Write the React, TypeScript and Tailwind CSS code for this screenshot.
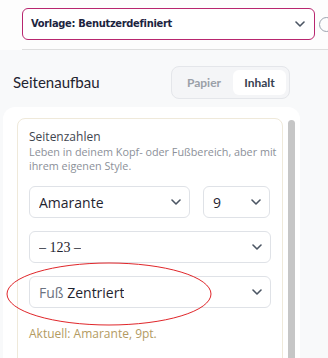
import * as React from "react";

/* ---------------- Icons ---------------- */

const Chevron = ({ className = "" }: { className?: string }) => (
  <svg width="10" height="6" viewBox="0 0 10 6" className={className} fill="none">
    <path d="M1 1l4 4 4-4" stroke="currentColor" strokeWidth="1.6" strokeLinecap="round" strokeLinejoin="round" />
  </svg>
);

/* ---------------- Select box ---------------- */

const SelectBox = ({
  children,
  className = "",
}: {
  children: React.ReactNode;
  className?: string;
}) => (
  <div
    className={
      "flex h-[32px] items-center justify-between rounded-[6px] border border-[#dfe2e7] bg-white pl-[9px] pr-[8px] text-[14px] text-[#1f2430] " +
      className
    }
  >
    <span className="truncate">{children}</span>
    <Chevron className="text-[#4b5563]" />
  </div>
);

/* ---------------- App ---------------- */

export default function App() {
  return (
    <div className="relative h-[358px] w-[328px] overflow-hidden bg-[#f8f9fa] font-['Open_Sans',sans-serif]">
      {/* top bar */}
      <div className="bg-[#fdfdfd] pt-[8px]">
        <div className="ml-[22px] flex items-center gap-[4px] border-b border-[#dedede] pb-[9px]">
          <div className="flex h-[32px] w-[293px] shrink-0 items-center justify-between rounded-[6px] border border-[#b8266f] bg-white pl-[8px] pr-[9px]">
            <span className="font-['DejaVu_Sans_Condensed',sans-serif] text-[11px] font-bold tracking-[-0.3px] text-[#1c2440]">
              Vorlage: Benutzerdefiniert
            </span>
            <Chevron className="text-[#4b5563]" />
          </div>
          <div className="h-[15px] w-[15px] shrink-0 rounded-full border border-[#9ca3af]" />
        </div>
      </div>

      {/* heading row */}
      <div className="flex items-center justify-between pl-[13px] pr-[38px] pt-[16px]">
        <span className="font-['Lato',sans-serif] text-[15px] text-[#1f2430]">Seitenaufbau</span>
        <div className="flex h-[33px] w-[119px] items-center rounded-[8px] border border-[#e4e6ea] bg-[#f4f5f7] p-[3px] font-['Lato',sans-serif] text-[12px] font-bold">
          <span className="flex-1 text-center text-[#9aa0a8]">Papier</span>
          <span className="flex h-full w-[53px] items-center justify-center rounded-[6px] bg-white text-[#374151]">
            Inhalt
          </span>
        </div>
      </div>

      {/* panel */}
      <div className="ml-[3px] mt-[8px] flex w-[297px] gap-[5px] rounded-t-[12px] bg-white pl-[14px] pt-[11px]">
        <div className="w-[266px] shrink-0 rounded-[8px] border border-[#efe9da] px-[11px] pb-[14px] pt-[10px]">
          <div className="text-[12px] leading-[16px] text-[#3f4650]">Seitenzahlen</div>
          <div className="whitespace-nowrap text-[10.8px] leading-[14px] text-[#8b9099]">
            Leben in deinem Kopf- oder Fußbereich, aber mit
            <br />
            ihrem eigenen Style.
          </div>

          <div className="mt-[13px] flex gap-[13px]">
            <SelectBox className="w-[161px]">Amarante</SelectBox>
            <SelectBox className="w-[67px]">9</SelectBox>
          </div>
          <SelectBox className="mt-[13px] font-['Liberation_Serif',serif]">– 123 –</SelectBox>
          <SelectBox className="mt-[13px]">
            <span className="text-[#6b7280]">Fuß</span> Zentriert
          </SelectBox>

          <div className="mt-[18px] text-[12px] leading-[15px] text-[#b39b62]">Aktuell: Amarante, 9pt.</div>
        </div>
        <div className="mt-[2px] h-[260px] w-[7px] shrink-0 rounded-t-[4px] bg-[#c6c6c6]" />
      </div>

      {/* annotation ellipse */}
      <svg className="pointer-events-none absolute left-0 top-0" width="328" height="358">
        <ellipse cx="109" cy="294" rx="102" ry="31" fill="none" stroke="#e0262a" strokeWidth="1" />
      </svg>
    </div>
  );
}
